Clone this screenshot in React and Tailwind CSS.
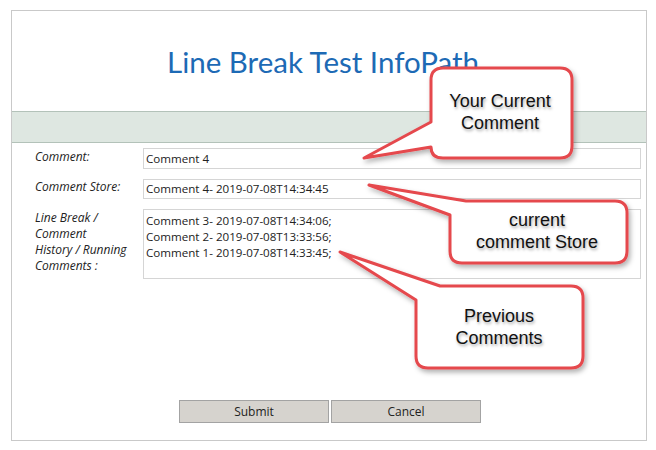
import React from 'react'

const ui = { fontFamily: '"Open Sans", "Noto Sans", sans-serif' }
const callFont = { fontFamily: '"Liberation Sans", Arial, sans-serif', textShadow: '1px 2px 3px rgba(0,0,0,0.35)' }

function Callouts() {
  return (
    <>
      <svg className="absolute inset-0 pointer-events-none" width="656" height="450" viewBox="0 0 656 450">
        <defs>
          <filter id="sh" x="-20%" y="-20%" width="140%" height="150%">
            <feDropShadow dx="2" dy="3" stdDeviation="2.5" floodColor="#000" floodOpacity="0.3" />
          </filter>
        </defs>
        <g fill="#fff" stroke="#e5484d" strokeWidth="3" strokeLinejoin="round" filter="url(#sh)">
          {/* your current comment */}
          <path d="M443 68 H560 Q572 68 572 80 V146 Q572 158 560 158 H443 Q431 158 431 147 L364 158 L431 122 V80 Q431 68 443 68 Z" />
          {/* current comment store */}
          <path d="M369 185 L466 201 H615 Q627 201 627 213 V251 Q627 263 615 263 H462 Q450 263 450 251 V215 Z" />
          {/* previous comments */}
          <path d="M340 252 L440 286 H571 Q583 286 583 298 V356 Q583 368 571 368 H428 Q416 368 416 356 V300 Z" />
        </g>
      </svg>
      <div className="absolute left-[431px] top-[90px] w-[138px] text-center text-[18px] leading-[22px] text-[#111]" style={callFont}>
        Your Current<br />Comment
      </div>
      <div className="absolute left-[450px] top-[209px] w-[174px] text-center text-[18px] leading-[22px] text-[#111]" style={callFont}>
        current<br />comment Store
      </div>
      <div className="absolute left-[416px] top-[305px] w-[166px] text-center text-[18px] leading-[22px] text-[#111]" style={callFont}>
        Previous<br />Comments
      </div>
    </>
  )
}

export default function App() {
  const history = [
    'Comment 3- 2019-07-08T14:34:06;',
    'Comment 2- 2019-07-08T13:33:56;',
    'Comment 1- 2019-07-08T14:33:45;',
  ]

  return (
    <div className="relative w-[656px] h-[450px] bg-white overflow-hidden" style={ui}>
      <div className="ml-[11px] mt-[10px] w-[636px] h-[431px] border border-[#c9c9c9] flex flex-col">
        {/* Title */}
        <div className="h-[100px] flex items-center justify-center pt-[3px] pr-[12px]">
          <h1 className="text-[29.5px] text-[#1d6ab5]" style={{ fontFamily: 'Lato, "Noto Sans", sans-serif' }}>
            Line Break Test InfoPath
          </h1>
        </div>

        {/* Band */}
        <div className="h-[32px] bg-[#dee7e1] border-y border-[#b3c2b9]" />

        {/* Form */}
        <div className="pl-[23px] pr-[5px] pt-[5px] flex flex-col gap-[10px] text-[11.6px] text-[#222]">
          <div className="flex">
            <div className="w-[108px] pt-[0px] italic text-[12px]">Comment:</div>
            <div className="flex-1 h-[21px] border border-[#d5d5d5] px-[2px] leading-[19px]">Comment 4</div>
          </div>
          <div className="flex">
            <div className="w-[108px] italic text-[12px] -mt-[1px]">Comment Store:</div>
            <div className="flex-1 h-[20px] border border-[#d5d5d5] px-[2px] leading-[18px]">Comment 4- 2019-07-08T14:34:45</div>
          </div>
          <div className="flex">
            <div className="w-[108px] italic text-[12px] leading-[16px] pt-[1px]">
              Line Break /<br />Comment<br />History / Running<br />Comments :
            </div>
            <div className="flex-1 h-[70px] border border-[#d5d5d5] px-[2px] pt-[3px] leading-[16px]">
              {history.map((h) => (
                <div key={h}>{h}</div>
              ))}
            </div>
          </div>
        </div>

        {/* Buttons */}
        <div className="mt-auto mb-[17px] flex justify-center gap-[2px] pl-[2px]">
          <button className="w-[150px] h-[23px] bg-[#d6d3ce] border border-[#a3a3a3] text-[12px] text-[#222]">Submit</button>
          <button className="w-[150px] h-[23px] bg-[#d6d3ce] border border-[#a3a3a3] text-[12px] text-[#222]">Cancel</button>
        </div>
      </div>

      <Callouts />
    </div>
  )
}
